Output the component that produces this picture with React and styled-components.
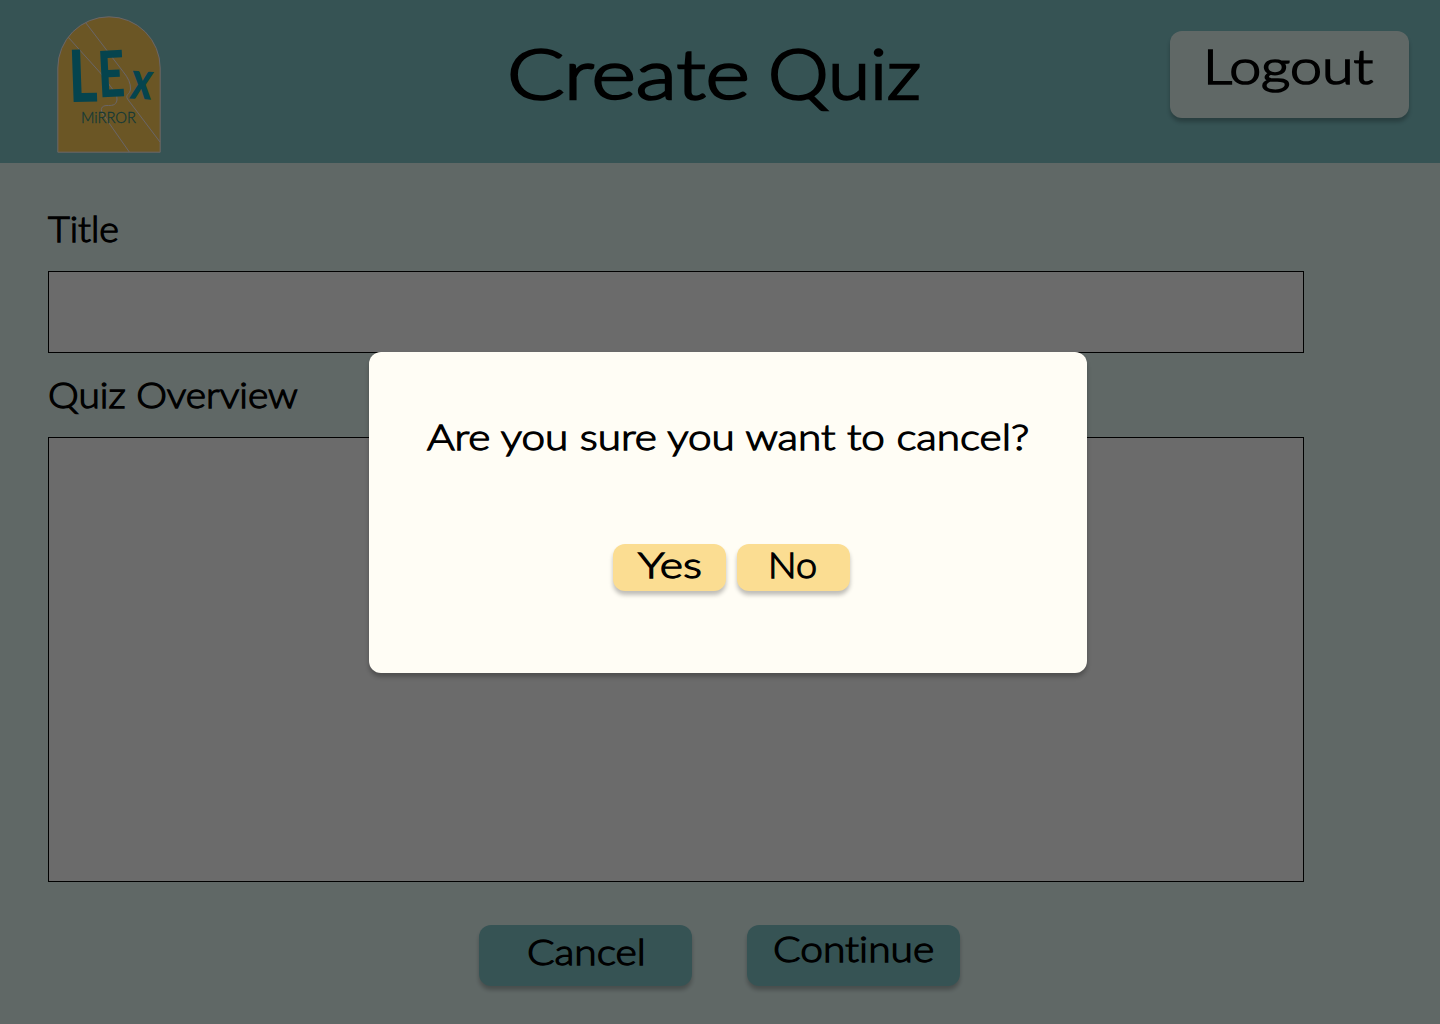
import React from "react";
import styled, { createGlobalStyle } from "styled-components";

const GlobalStyle = createGlobalStyle`
  *, *::before, *::after { box-sizing: border-box; }
  body { margin: 0; }
`;

const Page = styled.div`
  position: relative;
  width: 1440px;
  height: 1024px;
  overflow: hidden;
  display: flex;
  flex-direction: column;
  background: #e5f8f4;
  color: #000;
  font-family: Lato, "Open Sans", sans-serif;
  font-weight: 300;
`;

const Lettering = styled.span`
  display: block;
  width: max-content;
  white-space: nowrap;
  font-size: ${(p) => p.$size}px;
  line-height: ${(p) => p.$line}px;
  font-variant-ligatures: none;
  transform: scaleX(${(p) => p.$stretch});
  transform-origin: left center;
  -webkit-text-stroke: 0.036em currentColor;
  stroke-linejoin: round;
`;

const Header = styled.header`
  display: flex;
  align-items: flex-start;
  height: 163px;
  padding: 0 31px 0 57px;
  background: #81c6c9;
`;

const Logo = styled.svg`
  display: block;
  width: 104px;
  height: 137px;
  margin-top: 16px;
  flex: none;
`;

const Heading = styled.h1`
  display: grid;
  grid-template-columns: 261px auto;
  margin: 0 auto 0 346px;
  font-weight: inherit;
`;

const Button = styled.button`
  display: flex;
  align-items: flex-start;
  flex: none;
  margin: 0;
  border: 0;
  border-radius: 12px;
  color: inherit;
  font: inherit;
  box-shadow: 0 4px 4px rgba(0, 0, 0, 0.25);
`;

const LogoutButton = styled(Button)`
  width: 239px;
  height: 87px;
  margin-top: 31px;
  padding: 0 0 0 33px;
  background: #e5f8f4;
`;

const Form = styled.main`
  display: flex;
  flex-direction: column;
  padding: 22px 136px 0 48px;
`;

const Field = styled.label`
  display: flex;
  flex-direction: column;
`;

const Box = styled.div`
  height: ${(p) => p.$height}px;
  margin-top: ${(p) => p.$gap}px;
  border: 1px solid #000;
  background: #fff;
`;

const Actions = styled.div`
  display: flex;
  gap: 55px;
  margin: 43px 0 0 431px;
`;

const ActionButton = styled(Button)`
  width: 213px;
  height: 61px;
  padding: 0 0 0 ${(p) => p.$indent}px;
  background: #81c6c9;
`;

const Backdrop = styled.div`
  position: absolute;
  inset: 0;
  display: flex;
  align-items: flex-start;
  padding: 352px 0 0 369px;
  background: rgba(0, 0, 0, 0.58);
`;

const Dialog = styled.section`
  display: flex;
  flex-direction: column;
  width: 718px;
  height: 321px;
  padding-top: 60px;
  border-radius: 12px;
  background: #fffdf5;
  box-shadow: 0 4px 4px rgba(0, 0, 0, 0.25);
`;

const Question = styled.p`
  margin: 0 0 0 58px;
`;

const Choices = styled.div`
  display: flex;
  gap: 11px;
  margin: 83px 0 0 244px;
`;

const ChoiceButton = styled(Button)`
  width: 113px;
  height: 47px;
  padding: 0 0 0 ${(p) => p.$indent}px;
  background: #fbdd92;
`;

const Brush = styled.text`
  font-family: Lato, sans-serif;
  font-weight: 900;
  fill: #0ea2ba;
`;

const Script = styled.text`
  font-family: Lato, sans-serif;
  font-weight: 300;
  fill: #2f8880;
  stroke: #2f8880;
  stroke-width: 0.3;
`;

function LexLogo() {
  return (
    <Logo viewBox="0 0 104 137" role="img" aria-label="Lex Mirror">
      <path
        d="M.8 136.2V52a51.2 51.2 0 0 1 102.4 0v84.2Z"
        fill="#ffcd5a"
        stroke="#fbf2f6"
      />
      <g fill="none" stroke="#fbf2f6" strokeWidth="1">
        <path d="M28.7 6.7 66 55.5Q74 65 73.5 73C73 79 68 78 70.5 83L103 126" />
        <path d="M11.3 21.3 43.7 57.3 57 75Q61 80 60 84C59 90 54 89.5 50 89.5C44 89.5 43 94 46 98L52 107 72.3 136" />
      </g>
      <Brush fontSize="72" transform="translate(12.5 86) rotate(-1) skewX(1) scale(.76 1)">L</Brush>
      <Brush fontSize="64" transform="translate(42 81.5) rotate(-3) scale(.73 1)">E</Brush>
      <Brush fontSize="54" transform="translate(72 82.5) rotate(3) skewX(-4) scale(.76 1)">x</Brush>
      <Script fontSize="15" x="24" y="106.5" textLength="55" lengthAdjust="spacingAndGlyphs">MiRROR</Script>
    </Logo>
  );
}

export default function App() {
  return (
    <>
      <GlobalStyle />
      <Page>
        <Header>
          <LexLogo />
          <Heading>
            <Lettering $size={69} $line={146} $stretch={1.23}>Create</Lettering>
            <Lettering $size={69} $line={146} $stretch={1.11}>Quiz</Lettering>
          </Heading>
          <LogoutButton>
            <Lettering $size={47} $line={71} $stretch={1.22}>Logout</Lettering>
          </LogoutButton>
        </Header>
        <Form>
          <Field>
            <Lettering $size={35} $line={86} $stretch={1.075}>Title</Lettering>
            <Box $height={82} $gap={0} />
          </Field>
          <Field>
            <Lettering $size={35} $line={82} $stretch={1.11}>Quiz Overview</Lettering>
            <Box $height={445} $gap={2} />
          </Field>
          <Actions>
            <ActionButton $indent={48}>
              <Lettering $size={35} $line={53} $stretch={1.165}>Cancel</Lettering>
            </ActionButton>
            <ActionButton $indent={25.5}>
              <Lettering $size={35} $line={47} $stretch={1.165}>Continue</Lettering>
            </ActionButton>
          </Actions>
        </Form>
        <Backdrop>
          <Dialog role="dialog">
            <Question>
              <Lettering $size={35} $line={49} $stretch={1.208}>Are you sure you want to cancel?</Lettering>
            </Question>
            <Choices>
              <ChoiceButton $indent={25}>
                <Lettering $size={35} $line={41} $stretch={1.27}>Yes</Lettering>
              </ChoiceButton>
              <ChoiceButton $indent={31}>
                <Lettering $size={35} $line={41} $stretch={1.08}>No</Lettering>
              </ChoiceButton>
            </Choices>
          </Dialog>
        </Backdrop>
      </Page>
    </>
  );
}
